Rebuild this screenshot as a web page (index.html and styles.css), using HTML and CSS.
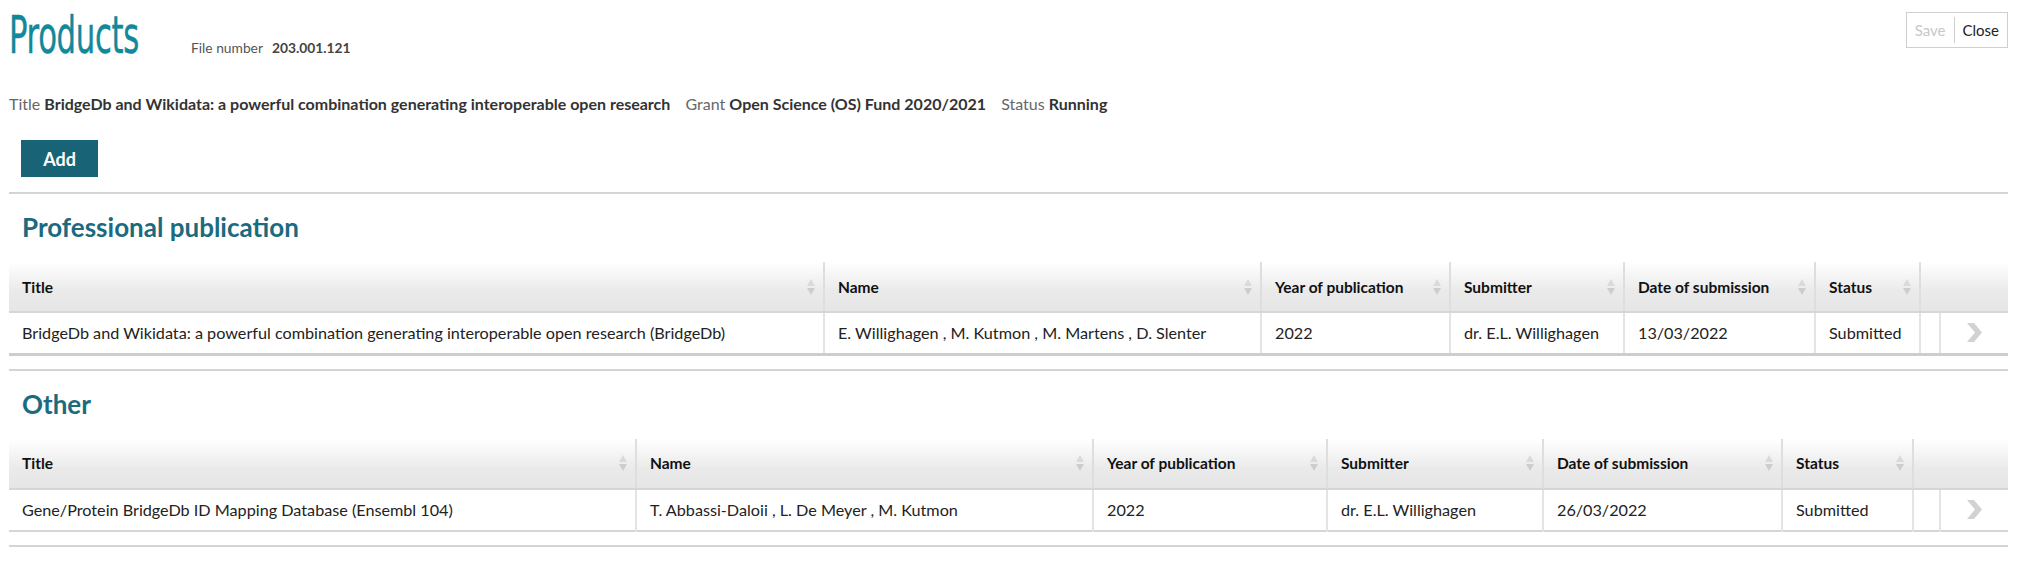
FILE: index.html
```html
<!DOCTYPE html>
<html lang="en">
<head>
<meta charset="utf-8">
<title>Products</title>
<link rel="stylesheet" href="styles.css">
</head>
<body>
<div class="page">
  <div class="topbar">
    <div class="titlegroup">
      <h1 class="pagetitle">Products</h1>
      <span class="filenr"><span class="label">File number</span><b>203.001.121</b></span>
    </div>
    <div class="actions">
      <button class="act act-disabled">Save</button>
      <button class="act">Close</button>
    </div>
  </div>

  <div class="meta">
    <span class="label">Title</span> <b>BridgeDb and Wikidata: a powerful combination generating interoperable open research</b>
    <span class="label sp">Grant</span> <b>Open Science (OS) Fund 2020/2021</b>
    <span class="label sp">Status</span> <b>Running</b>
  </div>

  <div class="addrow"><button class="btn-add">Add</button></div>

  <hr class="sep">

  <section class="block">
    <h2 class="sectitle">Professional publication</h2>
    <table class="grid t1">
      <colgroup>
        <col class="c1"><col class="c2"><col class="c3"><col class="c4"><col class="c5"><col class="c6"><col class="c7"><col class="c8">
      </colgroup>
      <thead>
        <tr>
          <th>Title<span class="sort"></span></th>
          <th>Name<span class="sort"></span></th>
          <th>Year of publication<span class="sort"></span></th>
          <th>Submitter<span class="sort"></span></th>
          <th>Date of submission<span class="sort"></span></th>
          <th>Status<span class="sort"></span></th>
          <th colspan="2" class="blank"></th>
        </tr>
      </thead>
      <tbody>
        <tr>
          <td>BridgeDb and Wikidata: a powerful combination generating interoperable open research (BridgeDb)</td>
          <td>E. Willighagen , M. Kutmon , M. Martens , D. Slenter</td>
          <td>2022</td>
          <td>dr. E.L. Willighagen</td>
          <td>13/03/2022</td>
          <td>Submitted</td>
          <td class="empty"></td>
          <td class="go"><svg width="16" height="19" viewBox="0 0 16 19"><path d="M0 0H7L15 9.5L7 19H0L8 9.5Z" fill="#d2d2d2"/></svg></td>
        </tr>
      </tbody>
    </table>
  </section>

  <hr class="sep">

  <section class="block">
    <h2 class="sectitle">Other</h2>
    <table class="grid t2">
      <colgroup>
        <col class="c1"><col class="c2"><col class="c3"><col class="c4"><col class="c5"><col class="c6"><col class="c7"><col class="c8">
      </colgroup>
      <thead>
        <tr>
          <th>Title<span class="sort"></span></th>
          <th>Name<span class="sort"></span></th>
          <th>Year of publication<span class="sort"></span></th>
          <th>Submitter<span class="sort"></span></th>
          <th>Date of submission<span class="sort"></span></th>
          <th>Status<span class="sort"></span></th>
          <th colspan="2" class="blank"></th>
        </tr>
      </thead>
      <tbody>
        <tr>
          <td>Gene/Protein BridgeDb ID Mapping Database (Ensembl 104)</td>
          <td>T. Abbassi-Daloii , L. De Meyer , M. Kutmon</td>
          <td>2022</td>
          <td>dr. E.L. Willighagen</td>
          <td>26/03/2022</td>
          <td>Submitted</td>
          <td class="empty"></td>
          <td class="go"><svg width="16" height="19" viewBox="0 0 16 19"><path d="M0 0H7L15 9.5L7 19H0L8 9.5Z" fill="#d2d2d2"/></svg></td>
        </tr>
      </tbody>
    </table>
  </section>

  <hr class="sep">
</div>
</body>
</html>
```

FILE: styles.css
```css
* { box-sizing: border-box; }
html, body { margin: 0; padding: 0; background: #fff; }
body {
  font-family: Lato, "Open Sans", "Liberation Sans", sans-serif;
  font-size: 16px;
  color: #222;
}
.page { padding: 0 18px 0 9px; }

.topbar {
  display: flex;
  justify-content: space-between;
  align-items: flex-start;
}
.titlegroup {
  display: flex;
  align-items: baseline;
  padding-top: 8px;
}
.pagetitle {
  margin: 0;
  font-family: "Liberation Sans Narrow", "DejaVu Sans Condensed", sans-serif;
  font-weight: normal;
  font-size: 51px;
  line-height: 56px;
  color: #12899a;
  transform: scaleX(0.67);
  transform-origin: left center;
  width: 140px;
  letter-spacing: -0.5px;
  -webkit-text-stroke: 0.4px #12899a;
}
.filenr { margin-left: 42px; font-size: 13.8px; }
.filenr .label { color: #555; margin-right: 9px; }
.filenr b { color: #444; }

.actions {
  display: flex;
  margin-top: 12px;
  border: 1px solid #cfcfcf;
  height: 36px;
  padding: 4px 0;
}
.act {
  font-family: inherit;
  font-size: 15px;
  background: none;
  border: none;
  padding: 0 8px;
  color: #222;
  cursor: pointer;
}
.act-disabled { color: #c8c8c8; border-right: 1px solid #cfcfcf; }

.meta {
  margin-top: 30px;
  font-size: 16px;
  color: #333;
}
.meta .label { color: #666; }
.meta .sp { margin-left: 11px; }

.addrow { padding: 27px 0 0 12px; }
.btn-add {
  font-family: inherit;
  font-weight: bold;
  font-size: 18px;
  color: #fff;
  background: #186376;
  border: none;
  width: 77px;
  height: 37px;
  cursor: pointer;
}

.sep {
  margin: 0;
  border: none;
  border-top: 2px solid #d4d4d4;
}
.addrow + .sep { margin-top: 15px; }

.block { padding-top: 18px; padding-bottom: 13px; }
.sectitle {
  margin: 0 0 20px 13px;
  font-size: 26px;
  line-height: 30px;
  font-weight: bold;
  color: #1c6a7f;
}

.grid {
  width: 100%;
  border-collapse: collapse;
  table-layout: fixed;
}
.grid th {
  position: relative;
  height: 50px;
  text-align: left;
  padding: 0 13px;
  font-weight: bold;
  font-size: 15.5px;
  color: #111;
  background: linear-gradient(#ffffff 0%, #eaeaea 60%, #e6e6e6 100%);
  border-right: 2px solid #dedede;
  border-bottom: 2px solid #d6d6d6;
}
.grid th.blank { border-right: none; }
.grid td {
  height: 42px;
  padding: 0 13px;
  font-size: 16.2px;
  color: #222;
  border-right: 2px solid #e4e4e4;
  white-space: nowrap;
  overflow: hidden;
}
.grid td.go { border-right: none; text-align: center; padding: 0; }
.grid td.go svg { display: block; margin: 0 auto; }
.grid td.empty { padding: 0; }
.grid tbody tr { border-bottom: 3px solid #cdcdcd; }
.t2 tbody tr { border-bottom: 2px solid #d6d6d6; }

.sort {
  position: absolute;
  right: 8px;
  top: 50%;
  margin-top: -10px;
  width: 8px;
  height: 20px;
}
.sort::before, .sort::after {
  content: "";
  position: absolute;
  left: 0;
  border-left: 4px solid transparent;
  border-right: 4px solid transparent;
}
.sort::before { top: 2px; border-bottom: 7px solid #dadada; }
.sort::after { bottom: 2px; border-top: 7px solid #cdcdcd; }

.t1 .c1 { width: 815px; }
.t1 .c2 { width: 437px; }
.t1 .c3 { width: 189px; }
.t1 .c4 { width: 174px; }
.t1 .c5 { width: 191px; }
.t1 .c6 { width: 105px; }
.t1 .c7 { width: 20px; }
.t1 .c8 { width: 68px; }

.t2 .c1 { width: 627px; }
.t2 .c2 { width: 457px; }
.t2 .c3 { width: 234px; }
.t2 .c4 { width: 216px; }
.t2 .c5 { width: 239px; }
.t2 .c6 { width: 131px; }
.t2 .c7 { width: 27px; }
.t2 .c8 { width: 68px; }
```
